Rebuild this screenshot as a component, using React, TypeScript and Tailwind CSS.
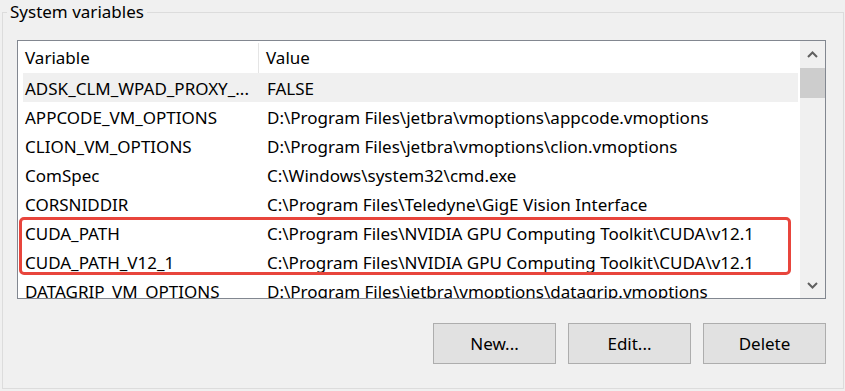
import React from "react";

const rows: [string, string][] = [
  ["ADSK_CLM_WPAD_PROXY_...", "FALSE"],
  ["APPCODE_VM_OPTIONS", "D:\\Program Files\\jetbra\\vmoptions\\appcode.vmoptions"],
  ["CLION_VM_OPTIONS", "D:\\Program Files\\jetbra\\vmoptions\\clion.vmoptions"],
  ["ComSpec", "C:\\Windows\\system32\\cmd.exe"],
  ["CORSNIDDIR", "C:\\Program Files\\Teledyne\\GigE Vision Interface"],
  ["CUDA_PATH", "C:\\Program Files\\NVIDIA GPU Computing Toolkit\\CUDA\\v12.1"],
  ["CUDA_PATH_V12_1", "C:\\Program Files\\NVIDIA GPU Computing Toolkit\\CUDA\\v12.1"],
  ["DATAGRIP_VM_OPTIONS", "D:\\Program Files\\jetbra\\vmoptions\\datagrip.vmoptions"],
];

export default function App() {
  return (
    <div
      className="w-[845px] h-[391px] bg-[#f0f0f0] overflow-hidden text-[17px] text-black pt-[12px] pl-[2px]"
      style={{ fontFamily: '"Noto Sans", "Segoe UI", sans-serif' }}
    >
      <div className="relative w-[842px] h-[377px] border border-[#dcdcdc] pl-[14px] pt-[27px]">
        <div className="absolute left-[4px] top-[-14px] px-[3px] bg-[#f0f0f0] leading-[26px]">
          System variables
        </div>
        <div className="flex w-[809px] h-[259px] border border-[#828790] bg-white">
          <div className="relative w-[782px] h-full overflow-hidden">
            <div className="flex h-[32px] items-center pt-[2px]">
              <div className="w-[241px] h-full flex items-center pl-[7px] border-r border-[#e5e5e5]">Variable</div>
              <div className="pl-[7px]">Value</div>
            </div>
            {rows.map(([k, v], i) => (
              <div
                key={k}
                className={`flex h-[29px] items-center pt-[2px] ml-[5px] w-[775px] ${i === 0 ? "bg-[#f0f0f0]" : ""}`}
              >
                <div className="w-[236px] pl-[2px] whitespace-nowrap overflow-hidden">{k}</div>
                <div className="pl-[8px] whitespace-nowrap">{v}</div>
              </div>
            ))}
            <div className="absolute left-[1px] top-[176px] w-[772px] h-[58px] border-[3px] border-[#e8453c] rounded-[5px]" />
          </div>
          <div className="w-[25px] h-full bg-[#f0f0f0] flex flex-col">
            <div className="h-[26px] flex items-center justify-center">
              <svg width="11" height="7" viewBox="0 0 11 7">
                <path d="M1 6 L5.5 1.5 L10 6" fill="none" stroke="#606060" strokeWidth="2" />
              </svg>
            </div>
            <div className="h-[30px] bg-[#cdcdcd] mt-[1px]" />
            <div className="flex-1" />
            <div className="h-[26px] flex items-center justify-center">
              <svg width="11" height="7" viewBox="0 0 11 7">
                <path d="M1 1 L5.5 5.5 L10 1" fill="none" stroke="#606060" strokeWidth="2" />
              </svg>
            </div>
          </div>
        </div>
        <div className="flex justify-end gap-[12px] w-[809px] mt-[24px]">
          {["New...", "Edit...", "Delete"].map((b) => (
            <div
              key={b}
              className="w-[123px] h-[41px] bg-[#e1e1e1] border border-[#adadad] flex items-center justify-center"
            >
              {b}
            </div>
          ))}
        </div>
      </div>
    </div>
  );
}
